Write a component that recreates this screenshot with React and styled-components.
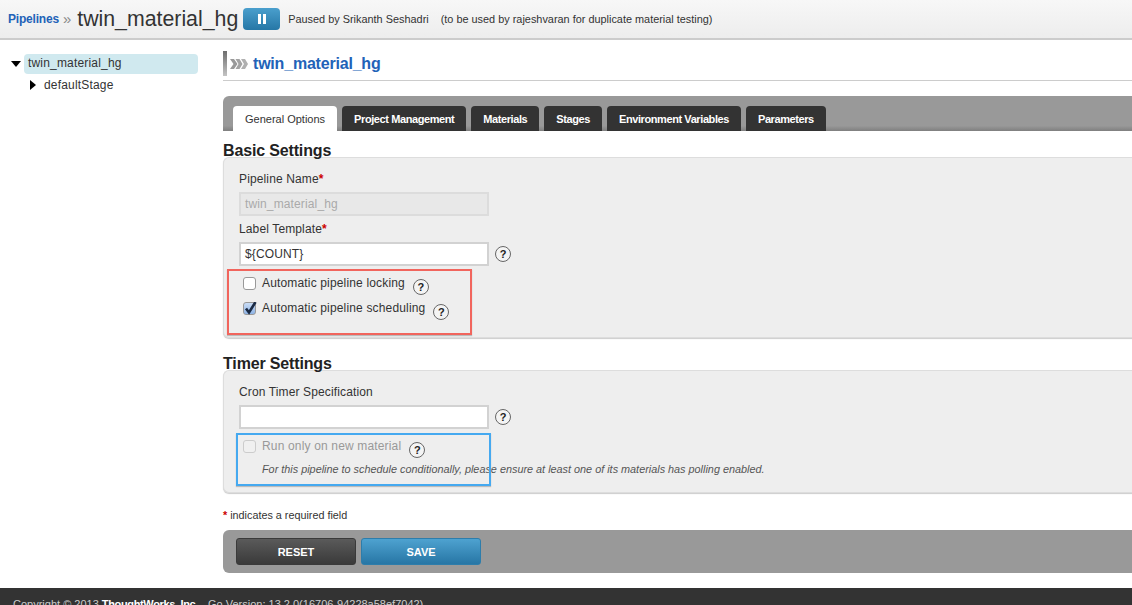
import React from "react";
import styled, { createGlobalStyle } from "styled-components";

const GlobalStyle = createGlobalStyle`
  html, body {
    margin: 0;
    padding: 0;
    background: #fff;
    height: 605px;
    overflow: hidden;
  }
  body {
    font-family: "Liberation Sans", Arial, sans-serif;
    color: #333;
  }
`;

const TABS = ["General Options", "Project Management", "Materials", "Stages", "Environment Variables", "Parameters"];

export default function App() {
  return (
    <Page>
      <GlobalStyle />
      <Header>
        <Crumb href="#">Pipelines</Crumb>
        <CrumbArrow>»</CrumbArrow>
        <PipelineName>twin_material_hg</PipelineName>
        <PauseButton aria-label="pause"><PauseBar /><PauseBar /></PauseButton>
        <PauseInfo>Paused by Srikanth Seshadri</PauseInfo>
        <PauseInfo $gap>(to be used by rajeshvaran for duplicate material testing)</PauseInfo>
      </Header>
      <Body>
        <Sidebar>
          <TreeRow>
            <Caret viewBox="0 0 10 6" $w={10} $h={6}><path d="M0 0h10L5 6z" fill="#000" /></Caret>
            <TreeSelected>twin_material_hg</TreeSelected>
          </TreeRow>
          <TreeChild>
            <Caret viewBox="0 0 6 10" $w={6} $h={10}><path d="M0 0l6 5-6 5z" fill="#000" /></Caret>
            <span>defaultStage</span>
          </TreeChild>
        </Sidebar>
        <Main>
          <TitleBar>
            <TitleMark />
            <Chevrons viewBox="0 0 18 10">
              <path d="M0 0h4l3.500 5L4 10H0l3.500-5z" fill="#999" />
              <path d="M5.500 0h4l3 5-3 5h-4l3-5z" fill="#a3a3a3" />
              <path d="M11 0h4l3 5-3 5h-4l3-5z" fill="#b0b0b0" />
            </Chevrons>
            <MainTitle>twin_material_hg</MainTitle>
          </TitleBar>
          <TabBar>
            {TABS.map((t, i) => (
              <Tab key={t} $active={i === 0}>{t}</Tab>
            ))}
          </TabBar>
          <SectionTitle>Basic Settings</SectionTitle>
          <Panel $height={181}>
            <FieldLabel>Pipeline Name<Req>*</Req></FieldLabel>
            <TextInput $disabled>twin_material_hg</TextInput>
            <FieldLabel $top={6}>Label Template<Req>*</Req></FieldLabel>
            <InputRow>
              <TextInput>{"${COUNT}"}</TextInput>
              <Help>?</Help>
            </InputRow>
            <CheckGroup>
              <RedMark />
              <CheckRow>
                <Check />
                <CheckText>Automatic pipeline locking</CheckText>
                <Help $drop>?</Help>
              </CheckRow>
              <CheckRow>
                <Check $on>
                  <svg viewBox="0 0 14 14" width="14" height="14">
                    <path d="M3 6.500l3 4L12.500 0" fill="none" stroke="#1a2a44" strokeWidth="2.600" />
                  </svg>
                </Check>
                <CheckText>Automatic pipeline scheduling</CheckText>
                <Help $drop>?</Help>
              </CheckRow>
            </CheckGroup>
          </Panel>
          <SectionTitle $top={19}>Timer Settings</SectionTitle>
          <Panel $height={123}>
            <FieldLabel>Cron Timer Specification</FieldLabel>
            <InputRow>
              <TextInput />
              <Help>?</Help>
            </InputRow>
            <CheckGroup>
              <BlueMark />
              <CheckRow>
                <Check $off />
                <CheckText $off>Run only on new material</CheckText>
                <Help $drop>?</Help>
              </CheckRow>
              <Hint>For this pipeline to schedule conditionally, please ensure at least one of its materials has polling enabled.</Hint>
            </CheckGroup>
          </Panel>
          <ReqNote><Req>*</Req> indicates a required field</ReqNote>
          <ActionBar>
            <ActionButton>RESET</ActionButton>
            <ActionButton $primary>SAVE</ActionButton>
          </ActionBar>
        </Main>
      </Body>
      <Footer>
        <span>Copyright © 2013 <b>ThoughtWorks, Inc.</b></span>
        <span>Go Version: 13.2.0(16706-94228a58ef7042)</span>
      </Footer>
    </Page>
  );
}

const Page = styled.div`
  width: 1132px;
  height: 605px;
  overflow: hidden;
  display: flex;
  flex-direction: column;
`;

const Header = styled.header`
  height: 38px;
  flex: none;
  display: flex;
  align-items: center;
  padding-left: 8px;
  background: linear-gradient(#f7f7f7, #ededed);
  border-bottom: 2px solid #ccc;
`;

const Crumb = styled.a`
  font-size: 12px;
  font-weight: bold;
  letter-spacing: -0.2px;
  color: #2262b8;
  text-decoration: none;
`;

const CrumbArrow = styled.span`
  font-size: 15px;
  color: #888;
  margin: -2px 6px 0 4px;
`;

const PipelineName = styled.span`
  font-size: 21.300px;
  line-height: 30px;
  color: #333;
`;

const PauseButton = styled.button`
  width: 37px;
  height: 22px;
  margin: 0 8px 0 5px;
  padding: 0;
  border: 0;
  border-radius: 4px;
  background: linear-gradient(#4a9fcd, #2677a6);
  display: flex;
  align-items: center;
  justify-content: center;
  gap: 2px;
`;

const PauseBar = styled.i`
  display: block;
  width: 3px;
  height: 10px;
  background: #fff;
`;

const PauseInfo = styled.span`
  font-size: 10.900px;
  color: #333;
  margin-left: ${(p) => (p.$gap ? "12px" : "0")};
`;

const Body = styled.div`
  flex: none;
  height: 548px;
  display: flex;
`;

const Sidebar = styled.nav`
  width: 223px;
  flex: none;
  padding-top: 14px;
  box-sizing: border-box;
  font-size: 12px;
  letter-spacing: 0.18px;
`;

const TreeRow = styled.div`
  display: flex;
  align-items: center;
  padding-left: 11px;
`;

const TreeChild = styled.div`
  display: flex;
  align-items: center;
  gap: 8px;
  padding: 3px 0 0 30px;
  line-height: 16px;
`;

const Caret = styled.svg`
  width: ${(p) => p.$w}px;
  height: ${(p) => p.$h}px;
  flex: none;
`;

const TreeSelected = styled.div`
  width: 170px;
  height: 20px;
  line-height: 18px;
  margin-left: 3px;
  padding-left: 4px;
  border-radius: 4px;
  background: #d0e9ef;
`;

const Main = styled.main`
  width: 960px;
  flex: none;
  padding-top: 11px;
  box-sizing: border-box;
`;

const TitleBar = styled.div`
  height: 29px;
  display: flex;
  align-items: flex-start;
  border-bottom: 1px solid #ccc;
  margin-bottom: 15px;
`;

const TitleMark = styled.div`
  width: 4px;
  height: 25px;
  background: linear-gradient(#6d6d6d, #c4c4c4);
`;

const Chevrons = styled.svg`
  width: 18px;
  height: 10px;
  margin: 8px 5px 0 3px;
`;

const MainTitle = styled.h1`
  margin: 0;
  font-size: 16px;
  line-height: 25px;
  font-weight: bold;
  letter-spacing: -0.2px;
  color: #2262b8;
`;

const TabBar = styled.div`
  height: 35px;
  box-sizing: border-box;
  padding: 10px 0 0 10px;
  display: flex;
  gap: 5px;
  border-radius: 6px 0 0 0;
  background: linear-gradient(#999 85%, #7f7f7f);
`;

const Tab = styled.div`
  height: 25px;
  line-height: 26px;
  padding: 0 12px;
  border-radius: 4px 4px 0 0;
  font-size: 11px;
  font-weight: ${(p) => (p.$active ? "normal" : "bold")};
  letter-spacing: ${(p) => (p.$active ? "0" : "-0.41px")};
  background: ${(p) => (p.$active ? "#fff" : "#333")};
  color: ${(p) => (p.$active ? "#333" : "#fff")};
`;

const SectionTitle = styled.h2`
  margin: ${(p) => p.$top ?? 13}px 0 -1px;
  font-size: 16px;
  line-height: 14px;
  font-weight: bold;
  letter-spacing: -0.15px;
  color: #222;
`;

const Panel = styled.section`
  height: ${(p) => p.$height}px;
  box-sizing: border-box;
  padding: 14px 0 0 15px;
  background: #eee;
  border: 1px solid #ddd;
  border-right: 0;
  border-radius: 6px 0 0 6px;
  box-shadow: 0 1px 1px #ccc;
`;

const FieldLabel = styled.div`
  margin-top: ${(p) => p.$top ?? 0}px;
  font-size: 12px;
  line-height: 14px;
  letter-spacing: 0.13px;
  margin-bottom: 6px;
  color: #333;
`;

const Req = styled.span`
  color: #c00;
  font-weight: bold;
`;

const InputRow = styled.div`
  display: flex;
  align-items: center;
`;

const TextInput = styled.div`
  width: 250px;
  height: 24px;
  box-sizing: border-box;
  padding-left: 4px;
  line-height: 20px;
  font-size: 12px;
  letter-spacing: 0.13px;
  border: 2px solid ${(p) => (p.$disabled ? "#dcdcdc" : "#d2d2d2")};
  background: ${(p) => (p.$disabled ? "#e8e8e8" : "#fff")};
  color: ${(p) => (p.$disabled ? "#aaa" : "#333")};
`;

const Help = styled.span`
  width: 14px;
  height: 14px;
  flex: none;
  margin: ${(p) => (p.$drop ? "3px 0 0 8px" : "0 0 0 6px")};
  border: 1px solid #666;
  border-radius: 50%;
  background: #f4f4f4;
  font-size: 11px;
  line-height: 14px;
  font-weight: bold;
  text-align: center;
  color: #222;
`;

const CheckGroup = styled.div`
  position: relative;
  margin-top: 10px;
  padding-left: 4px;
`;

const RedMark = styled.div`
  position: absolute;
  left: -12px;
  top: -7px;
  width: 245px;
  height: 66px;
  box-sizing: border-box;
  border: 2px solid #f1655d;
  box-shadow: 0 1px 1px #bbb;
`;

const BlueMark = styled.div`
  position: absolute;
  left: -3px;
  top: -6px;
  width: 255px;
  height: 53px;
  box-sizing: border-box;
  border: 2px solid #45a9f0;
  box-shadow: 0 1px 1px #bbb;
`;

const CheckRow = styled.div`
  display: flex;
  align-items: flex-start;
  height: 25px;
`;

const Check = styled.span`
  width: 11px;
  height: 11px;
  flex: none;
  margin-top: 1px;
  border: 1px solid ${(p) => (p.$off ? "#ccc" : "#999")};
  border-radius: 3px;
  background: ${(p) => (p.$on ? "linear-gradient(#c9dcf5, #8fb4e6)" : p.$off ? "#f0f0f0" : "#fff")};
  display: flex;
  svg {
    flex: none;
    margin: -1px 0 0 -1px;
  }
`;

const CheckText = styled.span`
  margin-left: 6px;
  font-size: 12px;
  line-height: 14px;
  letter-spacing: 0.16px;
  color: ${(p) => (p.$off ? "#999" : "#333")};
`;

const Hint = styled.div`
  margin: -2px 0 0 19px;
  white-space: nowrap;
  font-size: 10.850px;
  line-height: 14px;
  font-style: italic;
  color: #555;
`;

const ReqNote = styled.div`
  margin: 16px 0 8px;
  font-size: 10.800px;
  line-height: 13px;
  color: #333;
`;

const ActionBar = styled.div`
  height: 43px;
  box-sizing: border-box;
  padding: 8px 0 0 13px;
  display: flex;
  gap: 5px;
  background: #999;
  border-radius: 6px 0 0 6px;
`;

const ActionButton = styled.button`
  width: 120px;
  height: 27px;
  padding: 0;
  border: 1px solid ${(p) => (p.$primary ? "#2d7dab" : "#3a3a3a")};
  border-radius: 3px;
  font-family: inherit;
  font-size: 11px;
  font-weight: bold;
  color: #fff;
  background: ${(p) => (p.$primary ? "linear-gradient(#4ea2d0, #2776a5)" : "linear-gradient(#5a5a5a, #3a3a3a)")};
`;

const Footer = styled.footer`
  flex: none;
  height: 17px;
  background: #333;
  padding: 10px 0 0 13px;
  display: flex;
  gap: 10px;
  font-size: 11px;
  line-height: 13px;
  color: #ccc;
  b {
    color: #fff;
    letter-spacing: -0.35px;
  }
`;
